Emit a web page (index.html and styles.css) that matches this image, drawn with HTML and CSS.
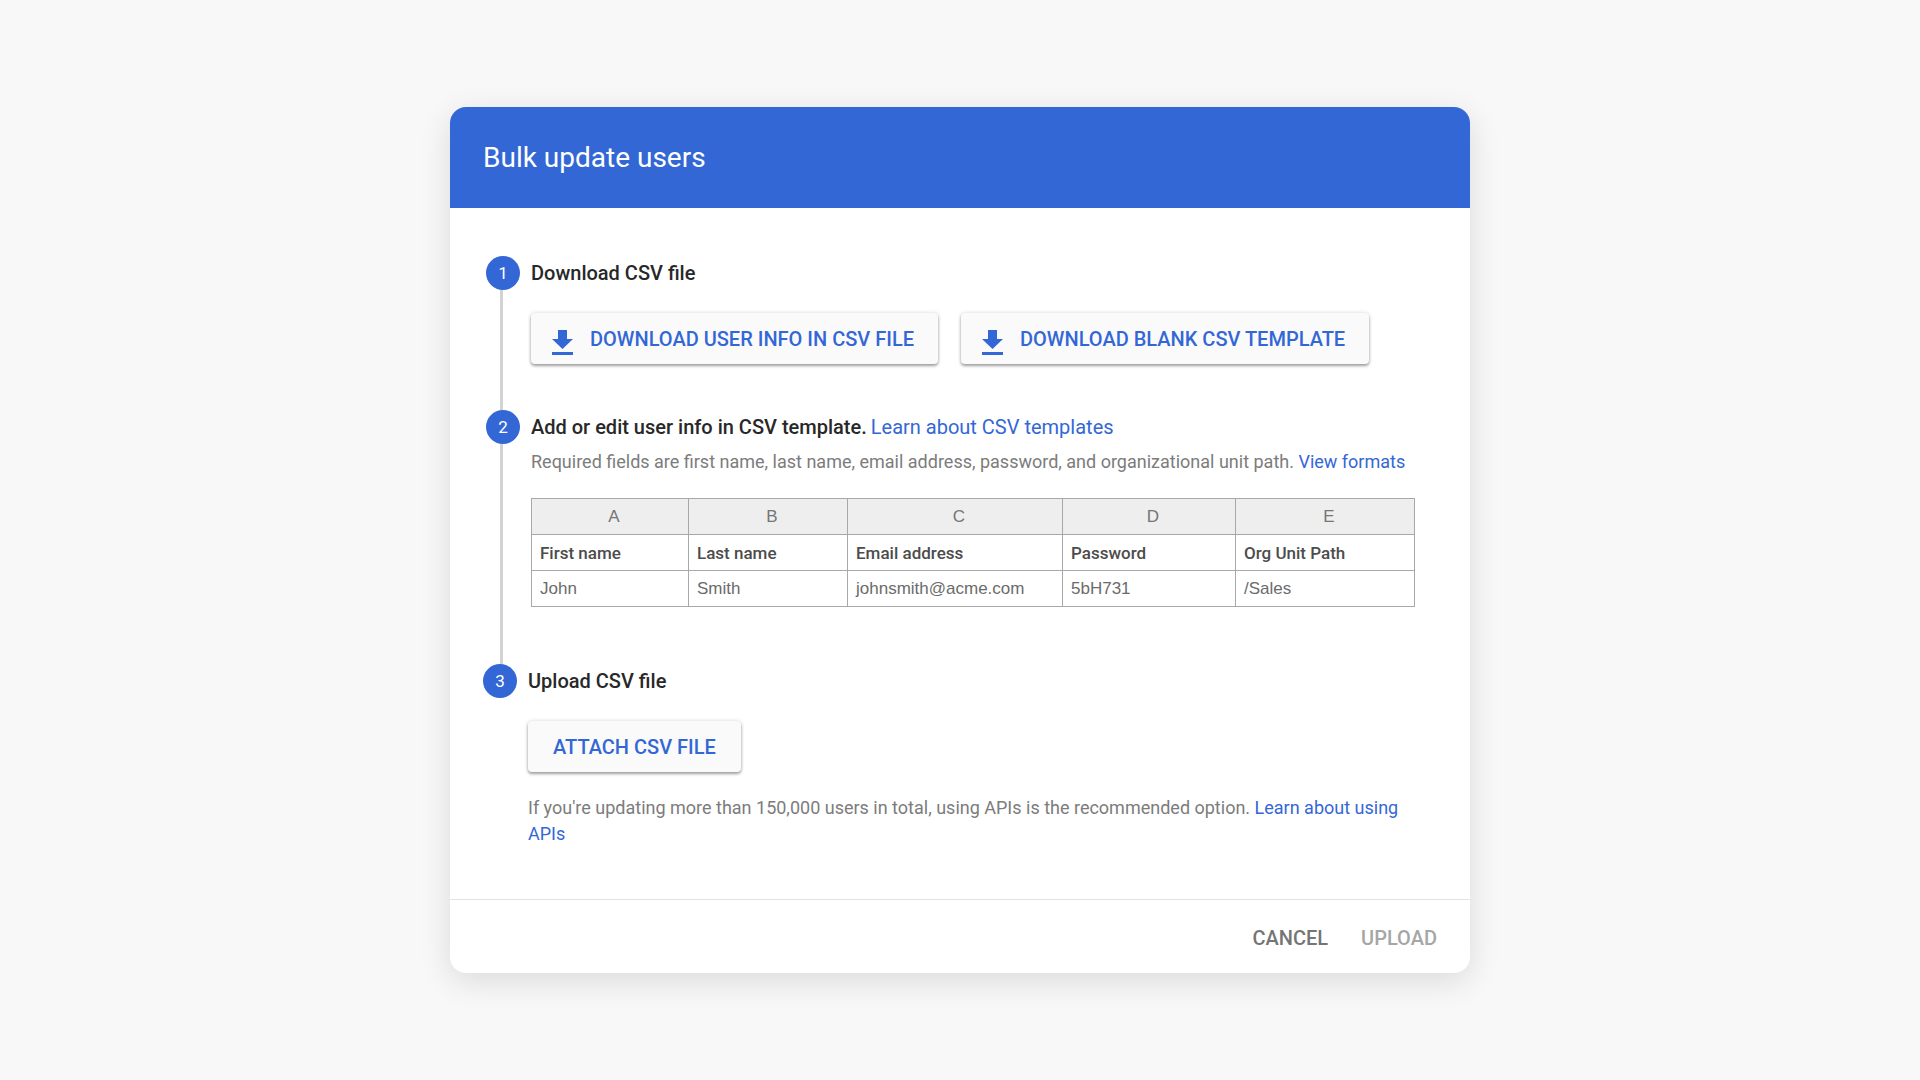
FILE: index.html
```html
<!DOCTYPE html>
<html lang="en">
<head>
  <meta charset="utf-8">
  <meta name="viewport" content="width=device-width, initial-scale=1">
  <title>Bulk update users</title>
  <link rel="stylesheet" href="styles.css">
</head>
<body>
  <main class="dialog" role="dialog" aria-labelledby="dialog-title">
    <header class="dialog-header">
      <h1 class="dialog-title" id="dialog-title">Bulk update users</h1>
    </header>

    <ol class="steps">
      <li class="step">
        <div class="marker"><span class="badge">1</span><span class="rail"></span></div>
        <div class="step-content">
          <h2 class="step-title">Download CSV file</h2>
          <div class="actions">
            <button class="raised with-icon" type="button">
              <svg class="icon" viewBox="0 0 21 25" aria-hidden="true"><path d="M6 0h9v9h6L10.500 19 0 9h6zM0 22h21v3H0z"/></svg>
              DOWNLOAD USER INFO IN CSV FILE
            </button>
            <button class="raised with-icon" type="button">
              <svg class="icon" viewBox="0 0 21 25" aria-hidden="true"><path d="M6 0h9v9h6L10.500 19 0 9h6zM0 22h21v3H0z"/></svg>
              DOWNLOAD BLANK CSV TEMPLATE
            </button>
          </div>
        </div>
      </li>

      <li class="step">
        <div class="marker"><span class="badge">2</span><span class="rail"></span></div>
        <div class="step-content">
          <div class="step-heading">
            <h2 class="step-title">Add or edit user info in CSV template.</h2>
            <a class="link" href="#templates">Learn about CSV templates</a>
          </div>
          <p class="hint">Required fields are first name, last name, email address, password, and organizational unit path. <a class="link" href="#formats">View formats</a></p>
          <table class="sheet">
            <colgroup>
              <col class="col-first"><col class="col-last"><col class="col-email"><col class="col-password"><col class="col-path">
            </colgroup>
            <thead>
              <tr class="letters"><th>A</th><th>B</th><th>C</th><th>D</th><th>E</th></tr>
            </thead>
            <tbody>
              <tr class="fields"><th scope="col">First name</th><th scope="col">Last name</th><th scope="col">Email address</th><th scope="col">Password</th><th scope="col">Org Unit Path</th></tr>
              <tr><td>John</td><td>Smith</td><td>johnsmith@acme.com</td><td>5bH731</td><td>/Sales</td></tr>
            </tbody>
          </table>
        </div>
      </li>

      <li class="step">
        <div class="marker"><span class="badge">3</span></div>
        <div class="step-content">
          <h2 class="step-title">Upload CSV file</h2>
          <div class="actions">
            <button class="raised" type="button">ATTACH CSV FILE</button>
          </div>
          <p class="hint hint-after">If you're updating more than 150,000 users in total, using APIs is the recommended option. <a class="link" href="#apis">Learn about using APIs</a></p>
        </div>
      </li>
    </ol>

    <footer class="dialog-footer">
      <button class="flat" type="button">CANCEL</button>
      <button class="flat" type="button" disabled>UPLOAD</button>
    </footer>
  </main>
</body>
</html>
```
FILE: styles.css
```css
:root {
  --blue: #3367d6;
  --ink: #282828;
  --muted: #7c7c7c;
  --grid: #a8a8a8;
}

* {
  box-sizing: border-box;
}

body {
  display: flex;
  align-items: center;
  justify-content: center;
  min-height: 100vh;
  margin: 0;
  padding: 24px;
  background: #f8f8f8;
  color: var(--ink);
  font-family: Roboto, "Liberation Sans", sans-serif;
  font-size: 20px;
}

.dialog {
  width: 100%;
  max-width: 1020px;
  overflow: hidden;
  border-radius: 16px;
  background: #fff;
  box-shadow: 0 8px 32px rgba(0, 0, 0, 0.12);
}

.dialog-header {
  padding: 32px 33px;
  background: var(--blue);
  color: #fff;
}

.dialog-title {
  margin: 0;
  font-size: 28px;
  font-weight: 400;
  line-height: 37px;
}

.steps {
  margin: 0;
  padding: 48px 34px 52px 33px;
  list-style: none;
}

.step {
  display: flex;
  gap: 11px;
  padding-left: 3px;
}

/* The last step has no rail and sits flush with the list edge. */
.step:last-child {
  padding-left: 0;
}

.marker {
  display: flex;
  flex: none;
  flex-direction: column;
  width: 34px;
}

.badge {
  height: 34px;
  border-radius: 50%;
  background: var(--blue);
  color: #fff;
  font-size: 17px;
  line-height: 34px;
  text-align: center;
}

.rail {
  flex: 1;
  width: 3px;
  margin-left: 14px;
  background: #d2d2d2;
}

.step-content {
  flex: 1;
  min-width: 0;
  padding-bottom: 46px;
}

.step:nth-child(2) .step-content {
  padding-bottom: 57px;
}

.step:last-child .step-content {
  padding-bottom: 0;
}

.step-heading {
  display: flex;
  flex-wrap: wrap;
  column-gap: 4px;
  line-height: 34px;
}

.step-title {
  margin: 0;
  font-size: 20px;
  font-weight: 500;
  line-height: 34px;
}

.link {
  color: var(--blue);
  text-decoration: none;
}

.hint {
  margin: 5px 0 23px;
  color: var(--muted);
  font-size: 18px;
  line-height: 26px;
}

.hint-after {
  margin: 23px 0 0;
}

.actions {
  display: flex;
  flex-wrap: wrap;
  gap: 23px;
  margin-top: 23px;
}

.raised,
.flat {
  border: 0;
  font-family: inherit;
  font-size: 20px;
  font-weight: 500;
  line-height: 24px;
  cursor: pointer;
}

.raised {
  display: flex;
  align-items: center;
  min-height: 51px;
  padding: 0 25px;
  border-radius: 4px;
  background: #fafafa;
  color: var(--blue);
  box-shadow: 0 2px 3px rgba(0, 0, 0, 0.34), 0 0 4px rgba(0, 0, 0, 0.14);
}

.with-icon {
  gap: 17px;
  padding: 0 24px 0 21px;
}

.icon {
  flex: none;
  width: 21px;
  height: 25px;
  margin-top: 8px;
  fill: currentColor;
}

.sheet {
  width: 100%;
  max-width: 883px;
  border-collapse: collapse;
  table-layout: fixed;
  color: #6b6b6b;
  font-family: "Liberation Sans", Arial, sans-serif;
  font-size: 17px;
  line-height: 20px;
}

.col-first { width: 157px; }
.col-last { width: 159px; }
.col-email { width: 215px; }
.col-password { width: 173px; }
.col-path { width: 179px; }

.sheet th,
.sheet td {
  height: 36px;
  padding: 0 0 0 8px;
  border: 1px solid var(--grid);
  text-align: left;
}

.sheet .letters th {
  background: #eee;
  color: #757575;
  font-weight: 400;
  text-align: center;
}

.fields th {
  color: #4c4c4c;
  font-family: Roboto, sans-serif;
  font-weight: 500;
}

.dialog-footer {
  display: flex;
  justify-content: flex-end;
  gap: 33px;
  padding: 26px 33px 23px;
  border-top: 1px solid #e2e2e2;
}

.flat {
  padding: 0;
  background: none;
  color: #757575;
}

.flat:disabled {
  color: #a6a6a6;
  cursor: default;
}
```
